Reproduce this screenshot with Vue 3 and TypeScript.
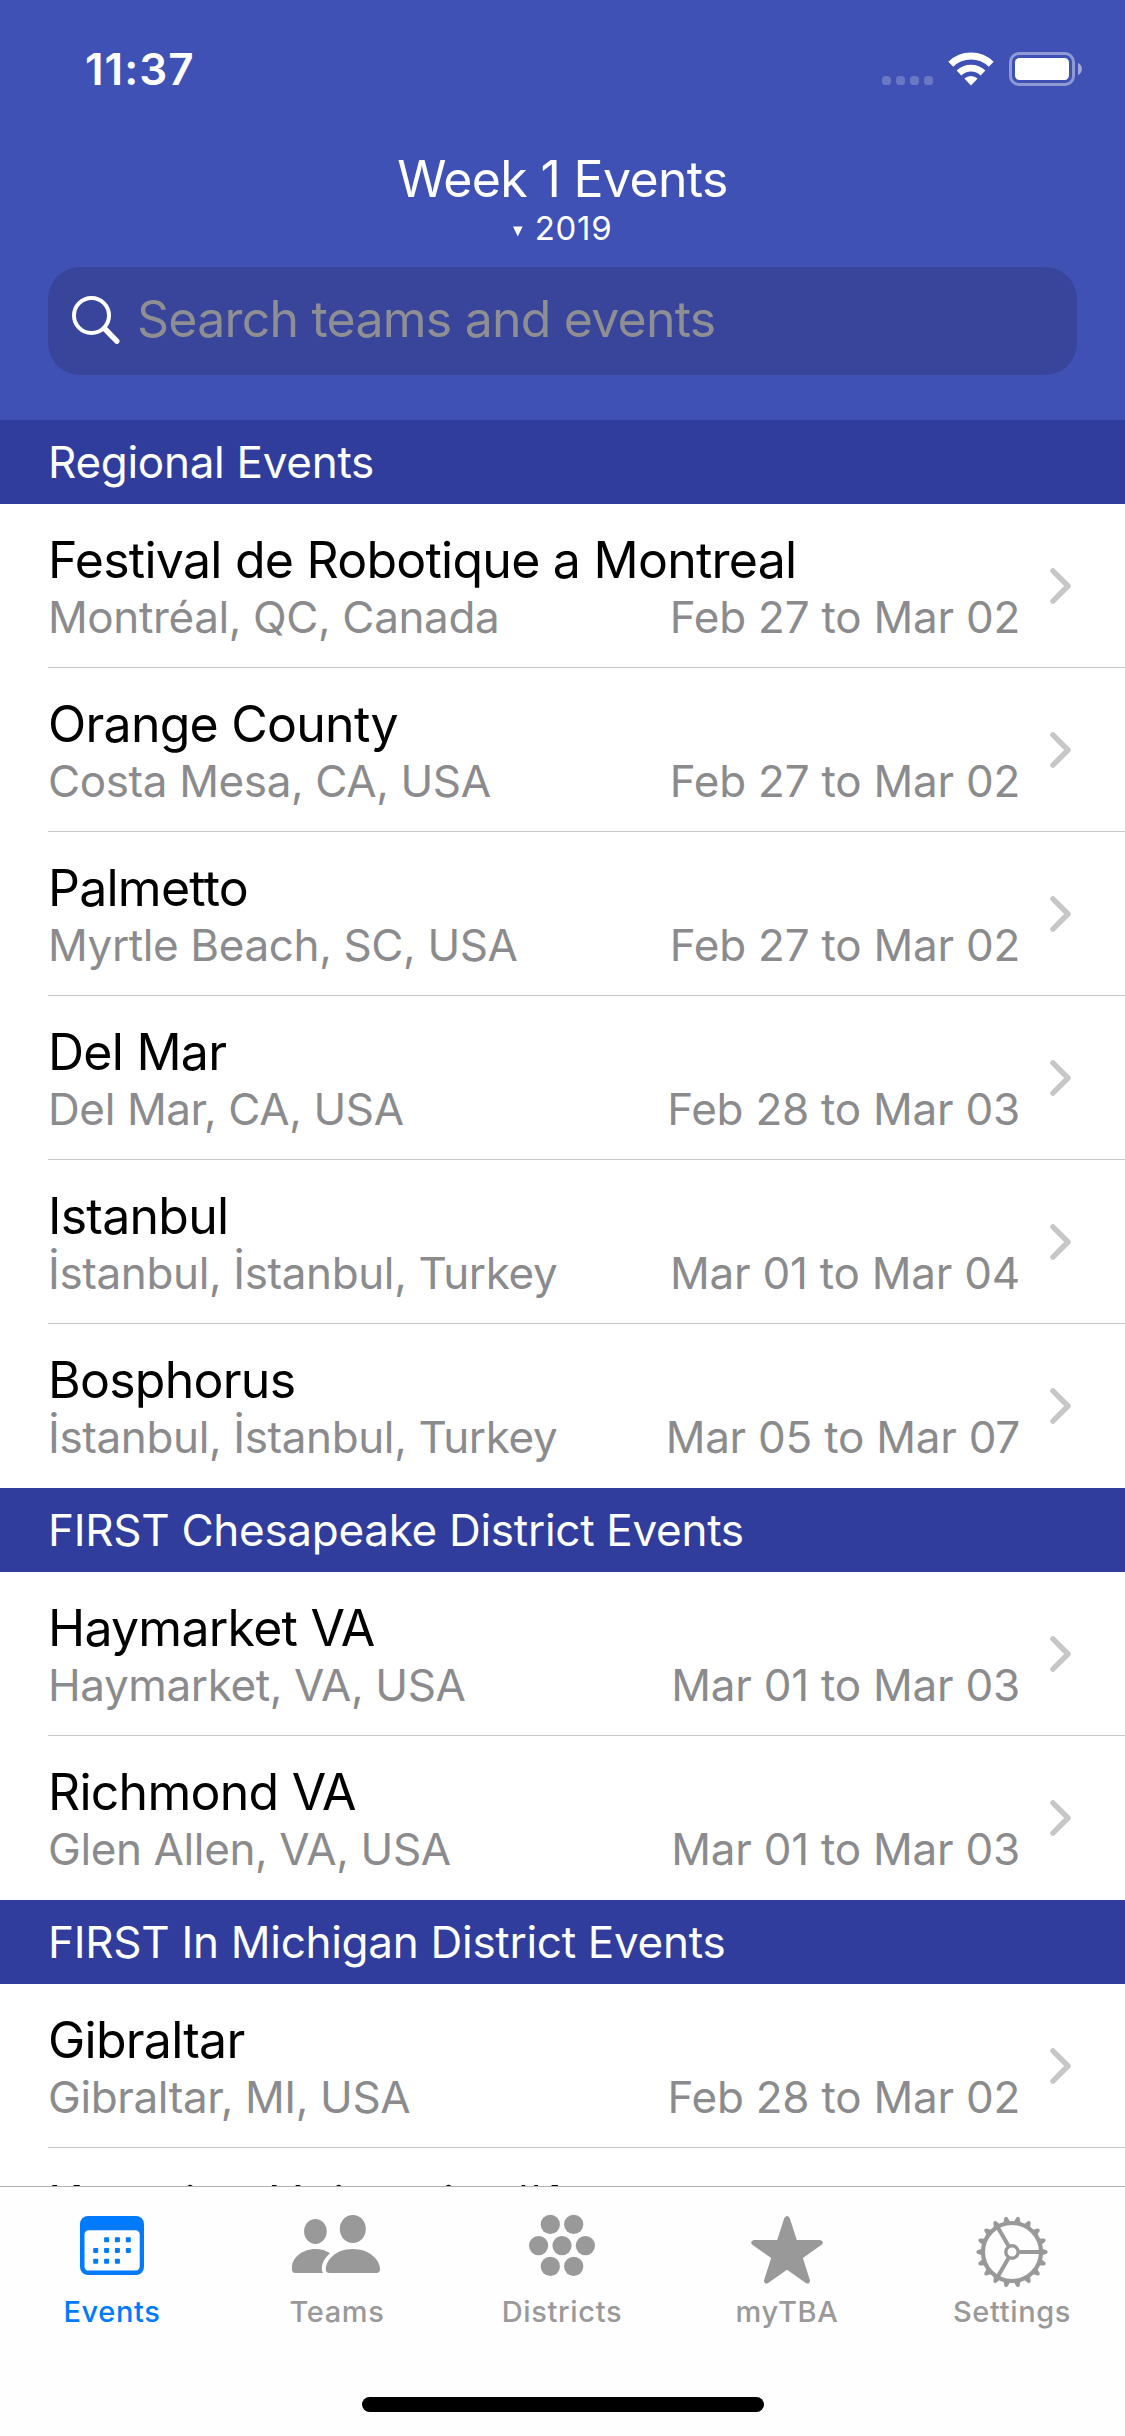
<script setup lang="ts">
interface EventRow {
  name: string
  place?: string
  dates?: string
}

interface Section {
  title: string
  events: EventRow[]
}

const sections: Section[] = [
  {
    title: 'Regional Events',
    events: [
      { name: 'Festival de Robotique a Montreal', place: 'Montréal, QC, Canada', dates: 'Feb 27 to Mar 02' },
      { name: 'Orange County', place: 'Costa Mesa, CA, USA', dates: 'Feb 27 to Mar 02' },
      { name: 'Palmetto', place: 'Myrtle Beach, SC, USA', dates: 'Feb 27 to Mar 02' },
      { name: 'Del Mar', place: 'Del Mar, CA, USA', dates: 'Feb 28 to Mar 03' },
      { name: 'Istanbul', place: 'İstanbul, İstanbul, Turkey', dates: 'Mar 01 to Mar 04' },
      { name: 'Bosphorus', place: 'İstanbul, İstanbul, Turkey', dates: 'Mar 05 to Mar 07' },
    ],
  },
  {
    title: 'FIRST Chesapeake District Events',
    events: [
      { name: 'Haymarket VA', place: 'Haymarket, VA, USA', dates: 'Mar 01 to Mar 03' },
      { name: 'Richmond VA', place: 'Glen Allen, VA, USA', dates: 'Mar 01 to Mar 03' },
    ],
  },
  {
    title: 'FIRST In Michigan District Events',
    events: [
      { name: 'Gibraltar', place: 'Gibraltar, MI, USA', dates: 'Feb 28 to Mar 02' },
      { name: 'Kettering University #1' },
    ],
  },
]

const calendarDots: [number, number][] = [
  [42.6, 29.7], [53.4, 29.7], [64.3, 29.7],
  [31.7, 40.4], [42.6, 40.4], [53.4, 40.4], [64.3, 40.4],
  [31.7, 51.3], [42.6, 51.3], [53.4, 51.3],
]

const clusterDots: [number, number][] = [
  [36.3, 14.4], [59.7, 14.4],
  [24.6, 35.6], [48, 35.6], [71.4, 35.6],
  [36.3, 56.4], [59.7, 56.4],
]

const teeth = Array.from({ length: 18 }, (_, i) => i * 20)
</script>

<template>
  <div class="screen">
    <header class="header">
      <div class="status">
        <span class="time">11:37</span>
        <div class="indicators">
          <div class="cell"><i v-for="n in 4" :key="n"></i></div>
          <svg class="wifi" width="46" height="34" viewBox="0 0 46 34">
            <g fill="none" stroke="#fff" stroke-width="7">
              <path d="M2.8 12.2 A29 29 0 0 1 43.2 12.2" />
              <path d="M11 21 A17.4 17.4 0 0 1 35 21" stroke-width="6.8" />
            </g>
            <path d="M23 33.4 L16.4 26.6 A9.6 9.6 0 0 1 29.6 26.6 Z" fill="#fff" />
          </svg>
          <svg class="battery" width="74" height="34" viewBox="0 0 74 34">
            <rect x="1.5" y="1.5" width="63" height="31" rx="8.5" fill="none" stroke="#fff" stroke-opacity=".42" stroke-width="3" />
            <rect x="6" y="6" width="54" height="22" rx="4.5" fill="#fff" />
            <path d="M69 11 a6.6 6.6 0 0 1 0 12 Z" fill="#fff" fill-opacity=".5" />
          </svg>
        </div>
      </div>
      <div class="title">Week 1 Events</div>
      <div class="year">
        <svg width="10" height="11" viewBox="0 0 10 11"><path d="M0 .5 H9.6 L4.8 10.4 Z" fill="#fff" /></svg>
        <span>2019</span>
      </div>
      <div class="search">
        <svg width="50" height="50" viewBox="0 0 50 50" fill="none" stroke="#fff">
          <circle cx="20.5" cy="20.5" r="17.5" stroke-width="4" />
          <path d="M33.5 33.5 L45.8 46.2" stroke-width="5.4" stroke-linecap="round" />
        </svg>
        <span>Search teams and events</span>
      </div>
    </header>

    <main class="list">
      <section v-for="s in sections" :key="s.title">
        <h2>{{ s.title }}</h2>
        <div v-for="e in s.events" :key="e.name" class="row">
          <div class="info">
            <div class="name">{{ e.name }}</div>
            <div v-if="e.place" class="detail">
              <span class="place">{{ e.place }}</span>
              <span class="dates">{{ e.dates }}</span>
            </div>
          </div>
          <svg class="chevron" width="24" height="40" viewBox="0 0 24 40">
            <path d="M4.9 4.8 L20 20 L4.9 35.2" fill="none" stroke="#c7c7c9" stroke-width="5.4" stroke-linecap="round" stroke-linejoin="round" />
          </svg>
        </div>
      </section>
    </main>

    <nav class="tabs">
      <div class="tab active">
        <svg width="97" height="80" viewBox="0 0 97 80" fill="currentColor">
          <path fill-rule="evenodd" d="M24 6 H72 A8 8 0 0 1 80 14 V57 A8 8 0 0 1 72 65 H24 A8 8 0 0 1 16 57 V14 A8 8 0 0 1 24 6 Z M24.6 20.3 A4 4 0 0 0 20.5 24.3 V56.5 A4 4 0 0 0 24.6 60.6 H71.6 A4 4 0 0 0 75.7 56.5 V24.3 A4 4 0 0 0 71.6 20.3 Z" />
          <rect v-for="([x, y], i) in calendarDots" :key="i" :x="x - 2.5" :y="y - 2.5" width="5" height="5" rx=".8" />
        </svg>
        <span>Events</span>
      </div>
      <div class="tab">
        <svg width="97" height="80" viewBox="0 0 97 80" fill="currentColor">
          <ellipse cx="26.4" cy="21.4" rx="11.3" ry="12.5" />
          <ellipse cx="63.8" cy="19" rx="13" ry="14" />
          <path d="M3 57.5 C3 48 13 39 26.4 39 C32 39 37 40.6 41 43.2 C36 47.4 32.8 53 32.8 58.5 C32.8 60.4 33.2 61.9 34.2 63 H6.4 C4 63 3 61.8 3 59.5 Z" />
          <path d="M36.8 59.2 C36.8 50 47 39 63.8 39 C80.6 39 91 50 91 59.2 C91 61.8 89.8 63 87.4 63 H40.4 C38 63 36.8 61.8 36.8 59.2 Z" />
        </svg>
        <span>Teams</span>
      </div>
      <div class="tab">
        <svg width="97" height="80" viewBox="0 0 97 80" fill="currentColor">
          <circle v-for="([x, y], i) in clusterDots" :key="i" :cx="x" :cy="y" r="9.6" />
        </svg>
        <span>Districts</span>
      </div>
      <div class="tab">
        <svg width="97" height="80" viewBox="0 0 97 80" fill="currentColor">
          <path d="M45.3 8 Q48 4 50.7 8 L57.8 30 H81 Q85.4 31.4 83 34.4 L63.9 48 L71 70.4 Q70.8 74.4 67.2 73.2 L48 59.7 L28.8 73.2 Q25.2 74.4 25 70.4 L32.1 48 L13 34.4 Q10.6 31.4 15 30 H38.2 Z" />
        </svg>
        <span>myTBA</span>
      </div>
      <div class="tab">
        <svg width="97" height="80" viewBox="0 0 97 80" fill="none" stroke="currentColor">
          <circle cx="48" cy="42" r="29" stroke-width="4.2" />
          <circle cx="48" cy="42" r="6.2" stroke-width="3.4" />
          <path v-for="a in [0, 120, 240]" :key="a" d="M55.4 42 H76" stroke-width="4" :transform="`rotate(${a} 48 42)`" />
          <path v-for="a in teeth" :key="'t' + a" d="M77.5 38.4 L82.6 40.3 Q84.8 42 82.6 43.7 L77.5 45.6 Z" fill="currentColor" stroke="none" :transform="`rotate(${a} 48 42)`" />
        </svg>
        <span>Settings</span>
      </div>
      <div class="home"></div>
    </nav>
  </div>
</template>

<style>
body {
  margin: 0;
}
</style>

<style scoped>
.screen {
  width: 1125px;
  height: 2436px;
  display: flex;
  flex-direction: column;
  overflow: hidden;
  background: #fff;
  font-family: Inter, "Liberation Sans", sans-serif;
  white-space: nowrap;
}
.header {
  flex: none;
  box-sizing: border-box;
  height: 420px;
  padding: 0 48px;
  background: #3f51b5;
  color: #fff;
}
.status {
  display: flex;
  justify-content: space-between;
  height: 149px;
  padding: 42px 0 0 37px;
  box-sizing: border-box;
}
.time {
  font-size: 44px;
  line-height: 54px;
  font-weight: 600;
  letter-spacing: 1px;
}
.indicators {
  display: flex;
  padding: 10px 0 0;
  margin-right: -6px;
}
.cell {
  display: flex;
  gap: 5px;
  margin: 24px 15px 0 0;
}
.cell i {
  width: 9px;
  height: 9px;
  border-radius: 3.6px;
  background: rgba(255, 255, 255, 0.22);
}
.battery {
  margin-left: 15px;
}
.title {
  text-align: center;
  font-size: 50px;
  line-height: 60px;
  letter-spacing: -0.66px;
}
.year {
  display: flex;
  justify-content: center;
  align-items: center;
  gap: 12px;
  height: 40px;
  margin-top: -1px;
  font-size: 33px;
  letter-spacing: 0.7px;
}
.year svg {
  margin-top: 7px;
}
.search {
  display: flex;
  align-items: center;
  height: 108px;
  margin-top: 19px;
  border-radius: 32px;
  background: #39459b;
  color: #8e8e93;
}
.search svg {
  margin: -2px 0 0 23px;
}
.search span {
  margin-left: 16px;
  font-size: 50px;
  line-height: 60px;
  letter-spacing: -0.78px;
  padding-bottom: 4px;
}
.list {
  flex: 1;
  min-height: 0;
  overflow: hidden;
}
h2 {
  margin: 0;
  height: 84px;
  box-sizing: border-box;
  padding: 15px 0 0 48px;
  background: #303d9d;
  color: #fff;
  font-size: 44px;
  line-height: 54px;
  font-weight: 400;
  letter-spacing: -0.28px;
}
.row {
  display: flex;
  box-sizing: border-box;
  height: 164px;
  margin-left: 48px;
  border-bottom: 1px solid #c8c8cb;
}
.row:last-child {
  border-bottom: 0;
}
.info {
  width: 972px;
  padding-top: 26px;
}
.name {
  color: #000;
  font-size: 50px;
  line-height: 60px;
  letter-spacing: -0.75px;
}
.detail {
  display: flex;
  justify-content: space-between;
  color: #8b8b8e;
  font-size: 44px;
  line-height: 54px;
}
.place {
  letter-spacing: -0.38px;
}
.dates {
  letter-spacing: -0.24px;
}
.chevron {
  margin: 62px 0 0 28px;
}
.tabs {
  position: relative;
  flex: none;
  display: flex;
  box-sizing: border-box;
  height: 250px;
  padding-top: 23px;
  border-top: 1px solid #b2b2b2;
  background: #fefefe;
}
.tab {
  width: 225px;
  display: flex;
  flex-direction: column;
  align-items: center;
  color: #999;
  font-size: 29px;
  line-height: 36px;
  font-weight: 500;
  letter-spacing: 0.65px;
}
.tab span {
  margin: 4px 1px 0 0;
}
.active {
  color: #007aff;
}
.home {
  position: absolute;
  left: 362px;
  top: 210px;
  width: 402px;
  height: 15px;
  border-radius: 8px;
  background: #000;
}
</style>
